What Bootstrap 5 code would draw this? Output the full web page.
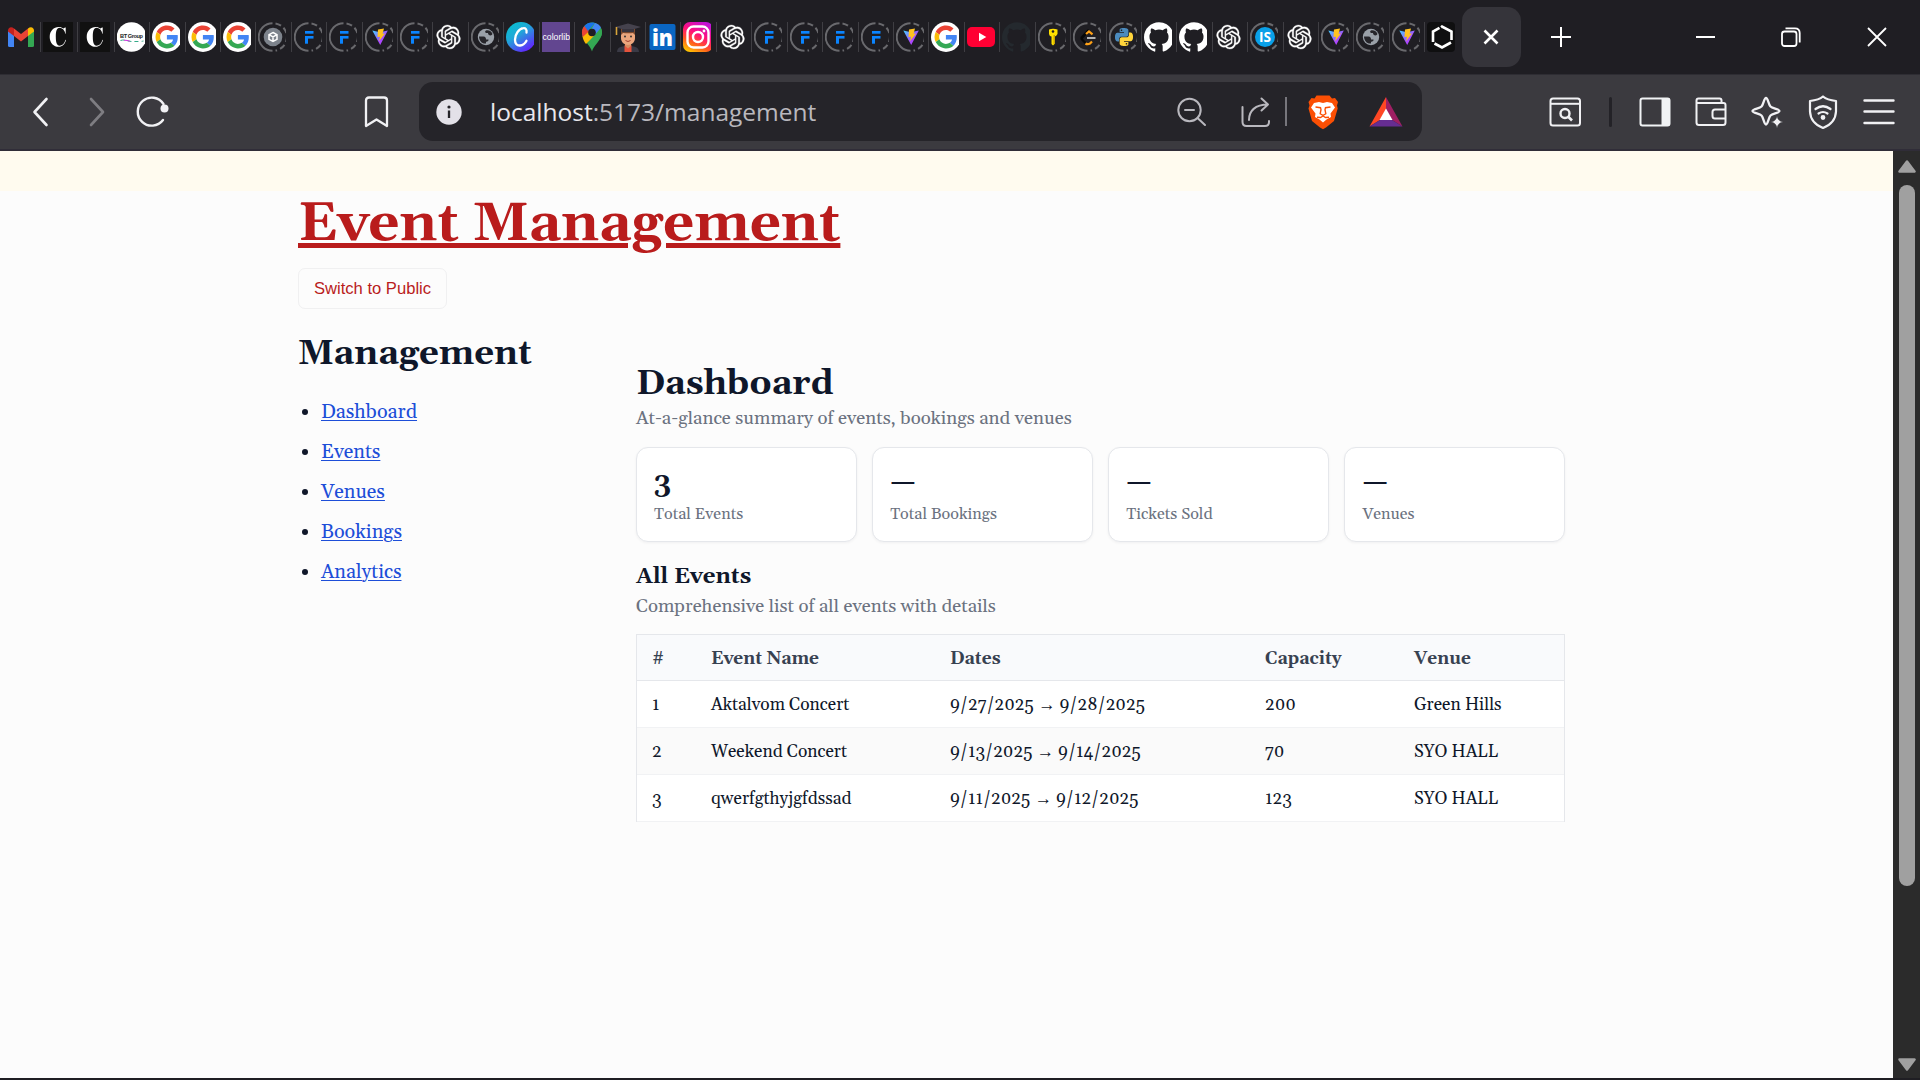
<!DOCTYPE html>
<html lang="en">
<head>
<meta charset="utf-8">
<title>Event Management</title>
<link rel="stylesheet" href="https://cdn.jsdelivr.net/npm/bootstrap@5.3.0/dist/css/bootstrap.min.css">
<script src="https://cdn.jsdelivr.net/npm/bootstrap@5.3.0/dist/js/bootstrap.bundle.min.js"></script>
<style>
  body { height: 1080px; background: #1f1e23; color: #0f172a; overflow: hidden; font-family: Gelasio, Georgia, "Liberation Serif", serif; }
  svg { display: block; flex: none; }

  /* tab strip */
  .tabstrip { height: 74px; background: #1f1e23; }
  .fav { width: 35.43px; height: 30px; padding-left: 2px; border-left: 1px solid #3f3e43; flex: none; }
  .fav.wide { width: 37px; }
  .fav.first { width: 39.7px; padding-left: 7px; border: 0; }
  .fav svg { width: 28px; height: 30px; }
  .fav.wide svg { width: 30px; }
  .tab-active { width: 59px; height: 60px; border-radius: 14px; background: #35343a; margin-left: 2px; }
  .wctl { color: #fff; padding: 0 33px 0 30px; }
  .wctl-group { gap: 66px; }

  /* toolbar */
  .toolbar { height: 77px; background: #3b3a3f; border-top: 1px solid #2e2d33; border-bottom: 2px solid #302d38; color: #ececf1; }
  .navgroup { width: 394px; padding-left: 24px; gap: 21.5px; }
  .urlbar { width: 1003px; height: 59px; margin: 0 0 1px 25px; padding: 0 19px 0 13px; border-radius: 14px; background: #252429; }
  .url { margin-left: 24px; font: 24.5px/34px "Open Sans", "Noto Sans", sans-serif; color: #b9b8be; white-space: nowrap; }
  .url span { color: #e9e8ed; }
  .ic-share { margin-left: 31px; }
  .ic-lion { margin-left: 19px; }
  .ic-bat { margin-left: 29px; }
  .vline { width: 2px; height: 29px; margin-left: 12px; background: #77767c; }
  .vline.dark { width: 3px; height: 30px; margin: 0 26px 0 27px; border-radius: 2px; background: #232227; }
  .toolgroup { margin-left: 126px; }
  .toolgroup svg + svg { margin-left: 22px; }

  /* page */
  .viewport { height: 927px; background: #fcfcfc; }
  .band { height: 40px; background: #fffbef; }
  .scroller { width: 27px; background: #2b2b2b; padding: 9px 0 7px; }
  .thumb { width: 16px; height: 701px; margin-top: 12px; border-radius: 8px; background: #a0a0a0; }
  .page { padding: 2px 0 0 298px; width: 1565px; }
  .site-title { font-size: 54.64px; line-height: 62px; font-weight: 700; color: #b91c1c; margin: 0; text-decoration: underline; text-decoration-thickness: 5px; text-underline-offset: 3px; }
  .btn-switch { margin-top: 13px; width: 149px; height: 41px; padding: 0; border: 1px solid #f0f0f1; border-radius: 7px; color: #b91c1c; font: 16.6px/39px "Liberation Sans", Arial, sans-serif; }
  .layout { margin-top: 24.5px; }
  .sidebar { width: 338px; }
  .head-lg { font-size: 34.75px; line-height: 40px; font-weight: 700; margin: 0; }
  .side-list { margin: 19px 0 0; padding-left: 23px; font-size: 19.8px; line-height: 40px; }
  .side-list a { color: #1d4ed8; text-decoration-thickness: 1px; text-underline-offset: 2px; }
  .main-col { width: 929px; padding-top: 30px; }
  .sub { font-size: 18.62px; line-height: 24px; color: #6b7280; margin: 3.500px 0 0; }
  .stats { margin-top: 15.5px; gap: 15.6px; }
  .stat { height: 95px; padding: 20px 17px 0; border: 1px solid #e5e7eb; border-radius: 12px; background: #fff; box-shadow: 0 1px 3px rgba(15,23,42,.05); flex: 1 1 0; }
  .stat-num { font-size: 27.3px; line-height: 30px; font-weight: 700; }
  .stat-label { font-size: 16.12px; line-height: 20px; color: #6b7280; margin-top: 7px; }
  .head-sm { font-size: 22.3px; line-height: 28px; font-weight: 700; margin: 21.5px 0 0; }
  .events { table-layout: fixed; width: 929px; margin: 15px 0 0; border: 1px solid #e5e7eb; border-bottom: 0; font-size: 17.36px; line-height: 24px; color: #0f172a; border-collapse: separate; border-spacing: 0; }
  .events > :not(caption) > * > * { height: 47px; padding: 2px 16px 0; color: #0f172a; vertical-align: middle; border-bottom: 1px solid #f1f2f4; background: #fff; box-shadow: none; }
  .events > thead > tr > th { height: 46px; padding-top: 3px; background: #f9fafc; color: #374151; border-bottom-color: #e5e7eb; }
  .events > tbody > tr:nth-child(2) > td { background: #fafafa; }
  .events > tbody > tr > td:first-child, .events > thead > tr > th:first-child { padding-left: 15px; }
  .arrow { font-family: "Liberation Serif", serif; }
</style>
</head>
<body>
<svg width="0" height="0" class="position-absolute">
  <defs>
    <linearGradient id="gVite" x1="0" y1="0" x2="1" y2="1"><stop offset="0" stop-color="#41d1ff"/><stop offset=".6" stop-color="#a94bff"/><stop offset="1" stop-color="#bd34fe"/></linearGradient>
    <linearGradient id="gCanva" x1="0" y1="0" x2=".7" y2="1"><stop offset="0" stop-color="#00c4cc"/><stop offset=".45" stop-color="#1fa8d8"/><stop offset="1" stop-color="#6420ff"/></linearGradient>
    <linearGradient id="gInsta" x1=".2" y1="1" x2=".7" y2="0"><stop offset="0" stop-color="#ffc800"/><stop offset=".3" stop-color="#ff5a1f"/><stop offset=".6" stop-color="#ff0f7b"/><stop offset="1" stop-color="#c013d8"/></linearGradient>
    <symbol id="ring" viewBox="0 0 28 30"><path d="M14.5 1.2A13.8 13.8 0 0 0 14.5 28.8" fill="none" stroke="#69696d" stroke-width="2"/><path d="M17.5 1.4A13.8 13.8 0 0 1 17.5 28.6" fill="none" stroke="#69696d" stroke-width="2" stroke-dasharray="6 3.2"/></symbol>
    <symbol id="gmail" viewBox="0 0 28 22"><path d="M1 4v15.5Q1 21 2.500 21H7V9z" fill="#4285f4"/><path d="M27 4v15.500q0 1.500-1.500 1.500H21V9z" fill="#34a853"/><path d="M7 2.500 14 8l7-5.500V10l-7 5.500L7 10z" fill="#ea4335"/><path d="M1 4.500C1 1.200 4.500 0 7 2.500V10L1 5.500z" fill="#c5221f"/><path d="M27 4.500C27 1.200 23.500 0 21 2.500V10l6-4.500z" fill="#fbbc04"/></symbol>
    <symbol id="cee" viewBox="0 0 30 30"><rect width="30" height="30" fill="#111"/><path d="M22.500 12c-1-4-3.200-6.200-6-6.200-2.800 0-3.700 3.700-3.700 9s1 9 3.700 9c2.800 0 5-2.300 6-6l.5.200c-1 4.300-3.700 6.800-7.300 6.800-5 0-9-4-9-9.900S10.700 5 15.700 5c2 0 3.500.6 4.800 1.500L22 5.500h.7V12z" fill="#fff"/></symbol>
    <symbol id="bt" viewBox="0 0 28 30"><circle cx="14.500" cy="15" r="14.800" fill="#fff"/><text x="3" y="15.500" font-family="Liberation Sans" font-weight="700" font-size="5.600" fill="#222" textLength="23">BT Group</text><path d="M3.500 18.500q3-1 6 0t6 1 6 0 5-.5" stroke="#3a8" fill="none" stroke-dasharray="4 3"/><path d="M7 18.200q3 0 6 1" stroke="#c3d" fill="none"/></symbol>
    <symbol id="goog" viewBox="0 0 28 30"><circle cx="15" cy="15" r="15" fill="#fff"/><g transform="translate(3.500 3.600) scale(.475)"><path fill="#EA4335" d="M24 9.500c3.540 0 6.710 1.220 9.210 3.600l6.850-6.850C35.900 2.380 30.470 0 24 0 14.620 0 6.510 5.380 2.560 13.220l7.980 6.190C12.430 13.720 17.740 9.500 24 9.500z"/><path fill="#4285F4" d="M46.980 24.550c0-1.570-.15-3.090-.38-4.550H24v9.020h12.940c-.58 2.960-2.260 5.480-4.780 7.180l7.730 6c4.510-4.180 7.090-10.360 7.090-17.650z"/><path fill="#FBBC05" d="M10.530 28.590c-.48-1.450-.76-2.990-.76-4.590s.27-3.140.76-4.590l-7.980-6.190C.92 16.460 0 20.120 0 24c0 3.880.92 7.540 2.560 10.780l7.970-6.190z"/><path fill="#34A853" d="M24 48c6.480 0 11.930-2.130 15.890-5.810l-7.730-6c-2.150 1.450-4.920 2.300-8.160 2.300-6.260 0-11.570-4.220-13.470-9.910l-7.980 6.190C6.510 42.620 14.620 48 24 48z"/></g></symbol>
    <symbol id="cube" viewBox="0 0 28 30"><use href="#ring"/><circle cx="15" cy="15" r="9.300" fill="#7d838c"/><path d="M15 10.500l4 2.200v4.600l-4 2.200-4-2.200v-4.600zM11 12.700l4 2.200 4-2.200M15 15v4.500" fill="none" stroke="#fff" stroke-width="1.500"/></symbol>
    <symbol id="eff" viewBox="0 0 28 30"><use href="#ring"/><g fill="#0a84ff"><rect x="11" y="9" width="8.500" height="2.700"/><rect x="11" y="14" width="8.500" height="2.600"/><rect x="11" y="14" width="3" height="7.700"/></g></symbol>
    <symbol id="vite" viewBox="0 0 28 30"><use href="#ring"/><path d="M7.300 8.500L15.200 23 22.800 8.500 15 10.300z" fill="url(#gVite)"/><path d="M19 6.500l-6 1.100-.5 7.500 2.500-.4-1 4.500 6-7.700-2.400.3z" fill="#ffc21f"/></symbol>
    <symbol id="gpt" viewBox="-1.500 -3 28 30"><path fill="#fff" stroke="#fff" stroke-width=".3" d="M22.2819 9.8211a5.9847 5.9847 0 0 0-.5157-4.9108 6.0462 6.0462 0 0 0-6.5098-2.9A6.0651 6.0651 0 0 0 4.9807 4.1818a5.9847 5.9847 0 0 0-3.9977 2.9 6.0462 6.0462 0 0 0 .7427 7.0966 5.98 5.98 0 0 0 .511 4.9107 6.051 6.051 0 0 0 6.5146 2.9001A5.9847 5.9847 0 0 0 13.2599 24a6.0557 6.0557 0 0 0 5.7718-4.2058 5.9894 5.9894 0 0 0 3.9977-2.9001 6.0557 6.0557 0 0 0-.7475-7.0729zm-9.022 12.6081a4.4755 4.4755 0 0 1-2.8764-1.0408l.1419-.0804 4.7783-2.7582a.7948.7948 0 0 0 .3927-.6813v-6.7369l2.02 1.1686a.071.071 0 0 1 .038.052v5.5826a4.504 4.504 0 0 1-4.4945 4.4944zm-9.6607-4.1254a4.4708 4.4708 0 0 1-.5346-3.0137l.142.0852 4.783 2.7582a.7712.7712 0 0 0 .7806 0l5.8428-3.3685v2.3324a.0804.0804 0 0 1-.0332.0615L9.74 19.9502a4.4992 4.4992 0 0 1-6.1408-1.6464zM2.3408 7.8956a4.485 4.485 0 0 1 2.3655-1.9728V11.6a.7664.7664 0 0 0 .3879.6765l5.8144 3.3543-2.0201 1.1685a.0757.0757 0 0 1-.071 0l-4.8303-2.7865A4.504 4.504 0 0 1 2.3408 7.872zm16.5963 3.8558L13.1038 8.364 15.1192 7.2a.0757.0757 0 0 1 .071 0l4.8303 2.7913a4.4944 4.4944 0 0 1-.6765 8.1042v-5.6772a.79.79 0 0 0-.407-.667zm2.0107-3.0231l-.142-.0852-4.7735-2.7818a.7759.7759 0 0 0-.7854 0L9.409 9.2297V6.8974a.0662.0662 0 0 1 .0284-.0615l4.8303-2.7866a4.4992 4.4992 0 0 1 6.6802 4.66zM8.3065 12.863l-2.02-1.1638a.0804.0804 0 0 1-.038-.0567V6.0742a4.4992 4.4992 0 0 1 7.3757-3.4537l-.142.0805L8.704 5.459a.7948.7948 0 0 0-.3927.6813zm1.0976-2.3654l2.602-1.4998 2.6069 1.4998v2.9994l-2.5974 1.4997-2.6067-1.4997Z"/></symbol>
    <symbol id="globe" viewBox="0 0 28 30"><use href="#ring"/><circle cx="15" cy="15" r="8.200" fill="#9aa0a8"/><path d="M8 14.500h4.500c2 0 2.500 1.500 2.500 3h2.500c.5 1.500-1.500 2-2.500 2.500v1.500c-4 .5-6.800-2.500-7-7zM15.500 8.300c-1.500.7-2 2-.5 2.700h2c0 1.500 1 2.500 2.500 2.500 1 0 1.500-.8 2-1.500-.8-2.200-3-4-6-3.700z" fill="#26252a"/></symbol>
    <symbol id="canva" viewBox="0 0 28 30"><circle cx="15" cy="15" r="15" fill="url(#gCanva)"/><path d="M20.500 10.500c.5-3-1-4.500-3-4.300-4.500.3-8.500 6-8.500 11.500 0 4 2 6 5 5.800 3-.2 5.300-2.300 6.500-4.700" fill="none" stroke="#fff" stroke-width="2.300" stroke-linecap="round"/></symbol>
    <symbol id="colorlib" viewBox="0 0 28 30"><rect width="28" height="30" fill="#624690"/><text x=".5" y="17.800" font-family="Liberation Sans" font-size="9.500" fill="#fff" textLength="27.500" lengthAdjust="spacingAndGlyphs">colorlib</text></symbol>
    <symbol id="gmap" viewBox="0 0 28 30"><path d="M15 29.500C14 24 5 18 5 10.500 5 5 9.500.5 15 .5s10 4.500 10 10C25 18 16 24 15 29.500z" fill="#34a853"/><path d="M5.500 14.500L11 8l6 6-8 8C7 19.500 6 17 5.500 14.500z" fill="#fbbc04"/><path d="M7.300 4.100L13 8.500 5.700 15C5 12 4 8 7.300 4.100z" fill="#ea4335"/><path d="M7.300 4.100C9.500 1.500 12 .5 15 .5c1 0 2 .1 3 .5l-7 8z" fill="#1a73e8"/><path d="M18 1c3 .8 5 2.500 6 5l-7 8-3-6z" fill="#4285f4"/><path d="M24 6c1.500 3 1 6 0 8.500L15 25l-4-4z" fill="#34a853"/><circle cx="15" cy="10.500" r="3.800" fill="#1f1e23"/></symbol>
    <symbol id="grad" viewBox="0 0 28 30"><path d="M4 30c0-4.500 4-6 11-6s11 1.500 11 6z" fill="#3a3a46"/><path d="M11.500 23l3.500 3 3.500-3v7h-7z" fill="#e5533c"/><path d="M12 19h6v5l-3 2.500-3-2.500z" fill="#d98c61"/><path d="M8 10h14v6c0 4-3 7-7 7s-7-3-7-7z" fill="#eba67d"/><path d="M8 7h14v6l-2-2c-3 .5-7 .3-10 0l-2 2z" fill="#7b4a2f"/><path d="M15 1.500l13 3.500-13 4L2 5z" fill="#45424d"/><path d="M3.500 5v8" stroke="#d9a63a" stroke-width="1.600"/><path d="M9 7v3h12V7z" fill="#37343e"/><circle cx="12" cy="14.500" r="1" fill="#333"/><circle cx="18" cy="14.500" r="1" fill="#333"/><path d="M12.500 18.500q2.500 2 5 0" stroke="#a03d2e" fill="none"/></symbol>
    <symbol id="linkedin" viewBox="0 0 28 30"><rect x="1.500" y="2" width="26" height="26" rx="2" fill="#0a66c2"/><text x="4" y="23.500" font-family="Open Sans" font-weight="800" font-size="22" fill="#fff" textLength="21" lengthAdjust="spacingAndGlyphs">in</text></symbol>
    <symbol id="insta" viewBox="0 0 28 30"><rect width="30" height="30" rx="7" fill="url(#gInsta)"/><rect x="4.500" y="4.500" width="21" height="21" rx="6" fill="none" stroke="#fff" stroke-width="2.400"/><circle cx="15" cy="15" r="5" fill="none" stroke="#fff" stroke-width="2.400"/><circle cx="21" cy="9" r="1.400" fill="#fff"/></symbol>
    <symbol id="yt" viewBox="0 0 28 30"><rect x="0" y="5" width="28" height="20" rx="5" fill="#ff0033"/><path d="M12 10.800v8.400l7.300-4.200z" fill="#fff"/></symbol>
    <symbol id="gh" viewBox="0 0 22.400 24"><path d="M12 .297c-6.630 0-12 5.373-12 12 0 5.303 3.438 9.800 8.205 11.385.6.113.82-.258.82-.577 0-.285-.01-1.040-.015-2.040-3.338.724-4.042-1.610-4.042-1.610C4.422 18.070 3.633 17.700 3.633 17.700c-1.087-.744.084-.729.084-.729 1.205.084 1.838 1.236 1.838 1.236 1.070 1.835 2.809 1.305 3.495.998.108-.776.417-1.305.76-1.605-2.665-.3-5.466-1.332-5.466-5.930 0-1.310.465-2.380 1.235-3.220-.135-.303-.54-1.523.105-3.176 0 0 1.005-.322 3.300 1.230.96-.267 1.980-.399 3-.405 1.020.006 2.040.138 3 .405 2.280-1.552 3.285-1.230 3.285-1.230.645 1.653.24 2.873.12 3.176.765.84 1.230 1.910 1.230 3.220 0 4.610-2.805 5.625-5.475 5.920.42.36.81 1.096.81 2.220 0 1.606-.015 2.896-.015 3.286 0 .315.21.69.825.57C20.565 22.092 24 17.592 24 12.297c0-6.627-5.373-12-12-12"/></symbol>
    <symbol id="keyi" viewBox="0 0 28 30"><use href="#ring"/><path d="M11 7.500q4-1.500 8.500 0v4.500q-1.500 2.500-3 2.500v7.500l-1.500 1.500-1.500-1.500v-7.500q-2 0-2.500-2.500z" fill="#ffe100"/><path d="M15.500 13v9h1.500v-9z" fill="#c9a400"/><circle cx="15" cy="9.500" r="1.300" fill="#1f1e23"/></symbol>
    <symbol id="leet" viewBox="0 0 28 30"><use href="#ring"/><path d="M16 8l-7 7.500" stroke="#070707" stroke-width="2.600"/><path d="M9 15q-1 1.500.5 3l3 3" fill="none" stroke="#070707" stroke-width="2.400"/><path d="M12.500 21.500q2 1.300 4.500 0l2-2M13 12l3-2.500 3.500 2.800" fill="none" stroke="#ffa116" stroke-width="2.200"/><path d="M14 16h8.500" stroke="#b3b3b3" stroke-width="2"/></symbol>
    <symbol id="snake" viewBox="0 0 24 24"><path d="M14.250.18l.9.200.73.260.59.300.45.320.34.340.25.340.16.330.1.300.04.260.02.200-.01.130V8.500l-.05.630-.13.550-.21.460-.26.380-.3.310-.33.250-.35.190-.35.140-.33.100-.3.070-.26.040-.21.020H8.770l-.69.050-.59.140-.5.220-.41.270-.33.320-.27.350-.2.360-.15.370-.1.350-.07.320-.04.270-.02.210v3.060H3.170l-.21-.03-.28-.07-.32-.12-.35-.18-.36-.26-.36-.36-.35-.46-.32-.59-.28-.73-.21-.88-.14-1.050-.05-1.230.06-1.220.16-1.040.24-.87.320-.71.360-.57.400-.44.420-.33.420-.24.400-.16.360-.1.320-.05.240-.01h.16l.06.010h8.160v-.83H6.180l-.01-2.750-.02-.37.050-.34.110-.31.170-.28.250-.26.310-.23.380-.2.440-.18.510-.15.580-.12.640-.1.710-.06.770-.04.840-.02 1.270.05zm-6.300 1.980l-.23.330-.08.410.08.410.23.340.33.220.41.090.41-.09.33-.22.23-.34.08-.41-.08-.41-.23-.33-.33-.22-.41-.09-.41.090z"/></symbol>
    <symbol id="python" viewBox="0 0 28 30"><use href="#ring"/><use href="#snake" x="6" y="6" width="18" height="18" fill="#4b8bbe"/><g transform="rotate(180 15 15)"><use href="#snake" x="6" y="6" width="18" height="18" fill="#ffd43b"/></g></symbol>
    <symbol id="isx" viewBox="0 0 28 30"><use href="#ring"/><circle cx="15" cy="15" r="10" fill="#0aa0e8"/><text x="9" y="20" font-family="Open Sans" font-weight="700" font-size="14" fill="#fff" textLength="12" lengthAdjust="spacingAndGlyphs">IS</text></symbol>
    <symbol id="hexa" viewBox="0 0 28 30"><rect width="28" height="30" rx="4" fill="#0f0f10"/><path d="M12.500 5.800L6 9.500v10.500M7.500 21.500l7.500 4 9-5M24.500 18V9.500L15 4.500l-1 .7" fill="none" stroke="#fff" stroke-width="2.600"/></symbol>
  </defs>
</svg>

<header>
  <div class="tabstrip d-flex align-items-center">
    <div class="fav first"><svg><use href="#gmail"/></svg></div>
    <div class="fav wide"><svg><use href="#cee"/></svg></div>
    <div class="fav wide"><svg><use href="#cee"/></svg></div>
    <div class="fav"><svg><use href="#bt"/></svg></div>
    <div class="fav"><svg><use href="#goog"/></svg></div>
    <div class="fav"><svg><use href="#goog"/></svg></div>
    <div class="fav"><svg><use href="#goog"/></svg></div>
    <div class="fav"><svg><use href="#cube"/></svg></div>
    <div class="fav"><svg><use href="#eff"/></svg></div>
    <div class="fav"><svg><use href="#eff"/></svg></div>
    <div class="fav"><svg><use href="#vite"/></svg></div>
    <div class="fav"><svg><use href="#eff"/></svg></div>
    <div class="fav"><svg><use href="#gpt"/></svg></div>
    <div class="fav"><svg><use href="#globe"/></svg></div>
    <div class="fav"><svg><use href="#canva"/></svg></div>
    <div class="fav"><svg><use href="#colorlib"/></svg></div>
    <div class="fav"><svg><use href="#gmap"/></svg></div>
    <div class="fav"><svg><use href="#grad"/></svg></div>
    <div class="fav"><svg><use href="#linkedin"/></svg></div>
    <div class="fav"><svg><use href="#insta"/></svg></div>
    <div class="fav"><svg><use href="#gpt"/></svg></div>
    <div class="fav"><svg><use href="#eff"/></svg></div>
    <div class="fav"><svg><use href="#eff"/></svg></div>
    <div class="fav"><svg><use href="#eff"/></svg></div>
    <div class="fav"><svg><use href="#eff"/></svg></div>
    <div class="fav"><svg><use href="#vite"/></svg></div>
    <div class="fav"><svg><use href="#goog"/></svg></div>
    <div class="fav"><svg><use href="#yt"/></svg></div>
    <div class="fav"><svg fill="#24292e"><use href="#gh"/></svg></div>
    <div class="fav"><svg><use href="#keyi"/></svg></div>
    <div class="fav"><svg><use href="#leet"/></svg></div>
    <div class="fav"><svg><use href="#python"/></svg></div>
    <div class="fav"><svg fill="#fff"><use href="#gh"/></svg></div>
    <div class="fav"><svg fill="#fff"><use href="#gh"/></svg></div>
    <div class="fav"><svg><use href="#gpt"/></svg></div>
    <div class="fav"><svg><use href="#isx"/></svg></div>
    <div class="fav"><svg><use href="#gpt"/></svg></div>
    <div class="fav"><svg><use href="#vite"/></svg></div>
    <div class="fav"><svg><use href="#globe"/></svg></div>
    <div class="fav"><svg><use href="#vite"/></svg></div>
    <div class="fav"><svg><use href="#hexa"/></svg></div>
    <div class="tab-active d-flex align-items-center justify-content-center">
      <svg width="16" height="16" stroke="#fff" stroke-width="2.600"><path d="M1.500 1.500l13 13M14.500 1.500l-13 13"/></svg>
    </div>
    <div class="wctl d-flex align-items-center justify-content-between flex-grow-1">
      <svg width="20" height="20" stroke="#fff" stroke-width="2"><path d="M10 0v20M0 10h20"/></svg>
      <div class="wctl-group d-flex align-items-center">
        <svg width="20" height="20" stroke="#fff" stroke-width="2"><path d="M1 10h19"/></svg>
        <svg width="20" height="20" fill="none" stroke="#fff" stroke-width="1.800"><rect x="1" y="4.500" width="14.500" height="14.500" rx="2.500"/><path d="M4.500 1.300H14q4.700 0 4.700 4.700v9.500"/></svg>
        <svg width="20" height="20" stroke="#fff" stroke-width="1.800"><path d="M1 1l18 18M19 1L1 19"/></svg>
      </div>
    </div>
  </div>

  <div class="toolbar d-flex align-items-center">
    <div class="navgroup d-flex align-items-center">
      <svg width="34" height="34" fill="none" stroke="#f1f1f4" stroke-width="2.600" stroke-linecap="round" stroke-linejoin="round"><path d="M22.500 4L10.500 17l12 13"/></svg>
      <svg width="34" height="34" fill="none" stroke="#7e7d82" stroke-width="2.600" stroke-linecap="round" stroke-linejoin="round"><path d="M11 4l12 13-12 13"/></svg>
      <svg width="34" height="34" fill="none" stroke="#f1f1f4" stroke-width="2.400" stroke-linecap="round"><path d="M28.500 9A14 14 0 1 0 28 25"/><circle cx="29.500" cy="13.500" r="4" fill="#f1f1f4" stroke="none"/></svg>
      <svg class="ms-auto" width="34" height="34" fill="none" stroke="#f1f1f4" stroke-width="2.300" stroke-linejoin="round"><path d="M6 31V5.500q0-3 3-3h15q3 0 3 3V31l-10.500-6.500z"/></svg>
    </div>
    <div class="urlbar d-flex align-items-center">
      <svg width="34" height="34"><circle cx="17" cy="17" r="12.700" fill="#e3e1e8"/><path d="M17 15.500v7.500" stroke="#252429" stroke-width="2.300"/><circle cx="17" cy="12" r="1.600" fill="#252429"/></svg>
      <div class="url"><span>localhost</span>:5173/management</div>
      <svg class="ms-auto" width="34" height="34" fill="none" stroke="#b9b8be" stroke-width="2" stroke-linecap="round"><circle cx="15.500" cy="15" r="11.200"/><path d="M11 15h9M23.500 23l7.500 7"/></svg>
      <svg class="ic-share" width="34" height="34" fill="none" stroke="#b9b8be" stroke-width="2" stroke-linecap="round" stroke-linejoin="round"><path d="M3.500 12v15q0 4 4 4h18.500q4 0 4-4v-1M10 25c0-9 6-15.500 19-15.500M22.500 3.500l6.500 6-6.500 6"/></svg>
      <div class="vline"></div>
      <svg class="ic-lion" width="34" height="36" viewBox="0 0 34 36"><path d="M10.500 1.500h13l2.500 3 3-.5 3 4-1 3.500.7 3-3.700 12.500-8 6.500L17 35.300l-3-1.800-8-6.500L2.500 14.500l1-3-1-3.500 3-4 3 .5z" fill="#fb4f04"/><path d="M8 9l5-1 4 1 4-1 5 1 3 4.500-4.500 6 .5 3.500-4.500 2.500-3.500 3-3.500-3L9 23l.5-3.500L5 13.500z" fill="#fff"/><path d="M9.500 13l5 .7.500 2-.8 4L17 21.500l2.800-1.800-.8-4 .5-2 5-.7M11 23.200l3.500.3 2.500-1.500 2.500 1.500 3.500-.3" fill="none" stroke="#fb4f04" stroke-width="1.400"/></svg>
      <svg class="ic-bat" width="34" height="34"><path d="M17 2L.5 31.500 11 25l6-10.500z" fill="#ff4724"/><path d="M17 2l16.500 29.500L23 25l-6-10.500z" fill="#9e1f63"/><path d="M.5 31.500h33L23 25H11z" fill="#662d91"/><path d="M17 13.500L10.500 25h13z" fill="#fff"/></svg>
    </div>
    <div class="toolgroup d-flex align-items-center">
      <svg width="34" height="34" fill="none" stroke="#f1f1f4" stroke-width="2"><rect x="2.500" y="3.500" width="29.500" height="27" rx="2.500"/><path d="M2.500 8.800H32"/><circle cx="17" cy="18.500" r="4.500" stroke-width="2.400"/><path d="M20 21.500l4 4" stroke-width="2.600"/></svg>
      <div class="vline dark"></div>
      <svg width="34" height="34"><rect x="2.500" y="3.500" width="29" height="27" rx="2" fill="none" stroke="#f1f3f5" stroke-width="2"/><path d="M23.500 3.500h8v27h-8z" fill="#f1f3f5"/></svg>
      <svg width="34" height="34" fill="none" stroke="#f1f1f4" stroke-width="2"><path d="M27.500 7.500V5.500q0-2-2-2H4.500q-2 0-2 2v22q0 2.500 2.500 2.500h24q2.500 0 2.500-2.500V10q0-2-2-2H2.500"/><path d="M32 14.500H21q-2.500 0-2.500 2.500v4q0 2.500 2.500 2.500h11"/></svg>
      <svg width="34" height="34"><path d="M16 3c2 0 2.500 6.500 4.500 8.500s9 2.500 9 4.500-7 2.500-9 4.500-2.500 9-4.500 9-2.500-7-4.500-9-9-2.500-9-4.500 7-2.500 9-4.500S14 3 16 3z" fill="none" stroke="#f1f1f4" stroke-width="2.300"/><path d="M27 21q.8 5 6 6-5.200 1-6 6-.8-5-6-6 5.200-1 6-6z" fill="#f1f1f4" stroke="#3b3a3f" stroke-width=".5"/></svg>
      <svg width="34" height="34" fill="none" stroke="#f1f1f4" stroke-width="2.200" stroke-linecap="round" stroke-linejoin="round"><path d="M17 1.500Q21 5 30 6v10.500Q29.500 28 17 33 4.500 28 4 16.500V6q9-1 13-4.500z"/><path d="M9.500 14q7.500-5.500 15 0M12.500 18.500q4.500-3 9 0"/><circle cx="17" cy="22.500" r="1.300" fill="#f1f1f4"/></svg>
      <svg width="34" height="34" stroke="#f1f1f4" stroke-width="2.400" stroke-linecap="round"><path d="M2.500 5.500h29M2.500 16.500h29M2.500 28h29"/></svg>
    </div>
  </div>
</header>

<div class="d-flex">
  <div class="viewport flex-grow-1">
    <div class="band"></div>
    <div class="page">
      <h1 class="site-title">Event Management</h1>
      <button class="btn btn-switch d-block">Switch to Public</button>
      <div class="layout d-flex align-items-start">
        <aside class="sidebar flex-shrink-0">
          <h2 class="head-lg">Management</h2>
          <ul class="side-list">
            <li><a href="#">Dashboard</a></li>
            <li><a href="#">Events</a></li>
            <li><a href="#">Venues</a></li>
            <li><a href="#">Bookings</a></li>
            <li><a href="#">Analytics</a></li>
          </ul>
        </aside>
        <main class="main-col flex-shrink-0">
          <h2 class="head-lg">Dashboard</h2>
          <p class="sub">At-a-glance summary of events, bookings and venues</p>
          <div class="stats d-flex">
            <div class="stat"><div class="stat-num">3</div><div class="stat-label">Total Events</div></div>
            <div class="stat"><div class="stat-num">—</div><div class="stat-label">Total Bookings</div></div>
            <div class="stat"><div class="stat-num">—</div><div class="stat-label">Tickets Sold</div></div>
            <div class="stat"><div class="stat-num">—</div><div class="stat-label">Venues</div></div>
          </div>
          <h3 class="head-sm">All Events</h3>
          <p class="sub">Comprehensive list of all events with details</p>
          <table class="table events">
            <colgroup><col style="width:58px"><col style="width:239px"><col style="width:315px"><col style="width:149px"><col></colgroup>
            <thead><tr><th>#</th><th>Event Name</th><th>Dates</th><th>Capacity</th><th>Venue</th></tr></thead>
            <tbody>
              <tr><td>1</td><td>Aktalvom Concert</td><td>9/27/2025 <span class="arrow">→</span> 9/28/2025</td><td>200</td><td>Green Hills</td></tr>
              <tr><td>2</td><td>Weekend Concert</td><td>9/13/2025 <span class="arrow">→</span> 9/14/2025</td><td>70</td><td>SYO HALL</td></tr>
              <tr><td>3</td><td>qwerfgthyjgfdssad</td><td>9/11/2025 <span class="arrow">→</span> 9/12/2025</td><td>123</td><td>SYO HALL</td></tr>
            </tbody>
          </table>
        </main>
      </div>
    </div>
  </div>
  <div class="scroller d-flex flex-column align-items-center flex-shrink-0">
    <svg width="20" height="13"><path d="M10 1.500L17.500 11.500h-15z" fill="#a0a0a0" stroke="#a0a0a0" stroke-width="2.500" stroke-linejoin="round"/></svg>
    <div class="thumb"></div>
    <svg class="mt-auto" width="20" height="13"><path d="M10 11.500L17.500 1.500h-15z" fill="#a0a0a0" stroke="#a0a0a0" stroke-width="2.500" stroke-linejoin="round"/></svg>
  </div>
</div>
</body>
</html>
